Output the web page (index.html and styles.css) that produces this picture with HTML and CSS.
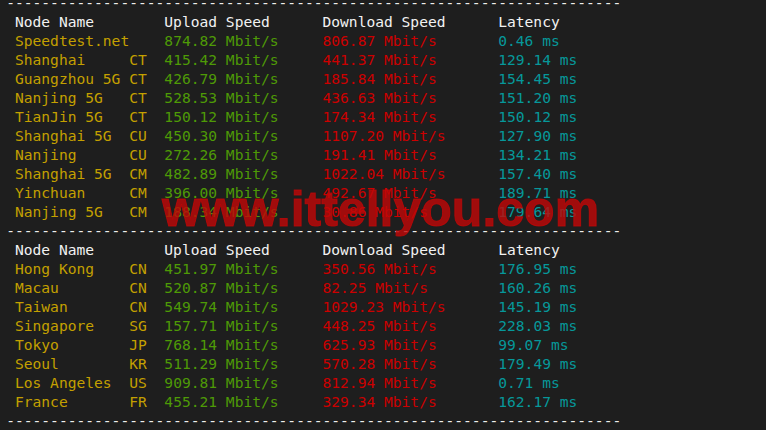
FILE: index.html
```html
<!DOCTYPE html>
<html lang="en">

<head>
    <meta charset="UTF-8">
    <meta name="viewport" content="width=device-width, initial-scale=1.0">
    <title>Speed Test</title>
    <link rel="stylesheet" href="styles.css">
</head>

<body>
    <div class="terminal">
<pre class="output"><span class="line">----------------------------------------------------------------------</span>
<span class="head"> Node Name        Upload Speed      Download Speed      Latency</span>
<span class="node"> Speedtest.net    </span><span class="up">874.82 Mbit/s     </span><span class="down">806.87 Mbit/s       </span><span class="ping">0.46 ms</span>
<span class="node"> Shanghai     CT  </span><span class="up">415.42 Mbit/s     </span><span class="down">441.37 Mbit/s       </span><span class="ping">129.14 ms</span>
<span class="node"> Guangzhou 5G CT  </span><span class="up">426.79 Mbit/s     </span><span class="down">185.84 Mbit/s       </span><span class="ping">154.45 ms</span>
<span class="node"> Nanjing 5G   CT  </span><span class="up">528.53 Mbit/s     </span><span class="down">436.63 Mbit/s       </span><span class="ping">151.20 ms</span>
<span class="node"> TianJin 5G   CT  </span><span class="up">150.12 Mbit/s     </span><span class="down">174.34 Mbit/s       </span><span class="ping">150.12 ms</span>
<span class="node"> Shanghai 5G  CU  </span><span class="up">450.30 Mbit/s     </span><span class="down">1107.20 Mbit/s      </span><span class="ping">127.90 ms</span>
<span class="node"> Nanjing      CU  </span><span class="up">272.26 Mbit/s     </span><span class="down">191.41 Mbit/s       </span><span class="ping">134.21 ms</span>
<span class="node"> Shanghai 5G  CM  </span><span class="up">482.89 Mbit/s     </span><span class="down">1022.04 Mbit/s      </span><span class="ping">157.40 ms</span>
<span class="node"> Yinchuan     CM  </span><span class="up">396.00 Mbit/s     </span><span class="down">492.67 Mbit/s       </span><span class="ping">189.71 ms</span>
<span class="node"> Nanjing 5G   CM  </span><span class="up">188.34 Mbit/s     </span><span class="down">30.86 Mbit/s        </span><span class="ping">179.64 ms</span>
<span class="line">----------------------------------------------------------------------</span>
<span class="head"> Node Name        Upload Speed      Download Speed      Latency</span>
<span class="node"> Hong Kong    CN  </span><span class="up">451.97 Mbit/s     </span><span class="down">350.56 Mbit/s       </span><span class="ping">176.95 ms</span>
<span class="node"> Macau        CN  </span><span class="up">520.87 Mbit/s     </span><span class="down">82.25 Mbit/s        </span><span class="ping">160.26 ms</span>
<span class="node"> Taiwan       CN  </span><span class="up">549.74 Mbit/s     </span><span class="down">1029.23 Mbit/s      </span><span class="ping">145.19 ms</span>
<span class="node"> Singapore    SG  </span><span class="up">157.71 Mbit/s     </span><span class="down">448.25 Mbit/s       </span><span class="ping">228.03 ms</span>
<span class="node"> Tokyo        JP  </span><span class="up">768.14 Mbit/s     </span><span class="down">625.93 Mbit/s       </span><span class="ping">99.07 ms</span>
<span class="node"> Seoul        KR  </span><span class="up">511.29 Mbit/s     </span><span class="down">570.28 Mbit/s       </span><span class="ping">179.49 ms</span>
<span class="node"> Los Angeles  US  </span><span class="up">909.81 Mbit/s     </span><span class="down">812.94 Mbit/s       </span><span class="ping">0.71 ms</span>
<span class="node"> France       FR  </span><span class="up">455.21 Mbit/s     </span><span class="down">329.34 Mbit/s       </span><span class="ping">162.17 ms</span>
<span class="line">----------------------------------------------------------------------</span></pre>
        <div class="watermark">www.ittellyou.com</div>
    </div>
</body>

</html>
```

FILE: styles.css
```css
html,
body {
    margin: 0;
    padding: 0;
    background-color: #1e1e1e;
    overflow: hidden;
}

.terminal {
    position: relative;
    height: 430px;
}

.output {
    margin: -7px 0 0 0;
    padding-left: 6.2px;
    font-family: 'DejaVu Sans Mono', 'Liberation Mono', monospace;
    font-size: 14.6px;
    line-height: 19px;
    color: #eeeeec;
}

.line {
    color: #eeeeec;
}

.head {
    color: #f2f2f2;
}

.node {
    color: #c4a000;
}

.up {
    color: #4e9a06;
}

.down {
    color: #cc0000;
}

.ping {
    color: #06989a;
}

/* site watermark stamped over the output */
.watermark {
    position: absolute;
    left: 162px;
    top: 191px;
    font-family: 'Liberation Sans', Arial, sans-serif;
    font-weight: bold;
    font-size: 50px;
    line-height: 1;
    color: rgba(192, 8, 8, 0.8);
    -webkit-text-stroke: 1px rgba(192, 8, 8, 0.8);
    white-space: nowrap;
}
```
